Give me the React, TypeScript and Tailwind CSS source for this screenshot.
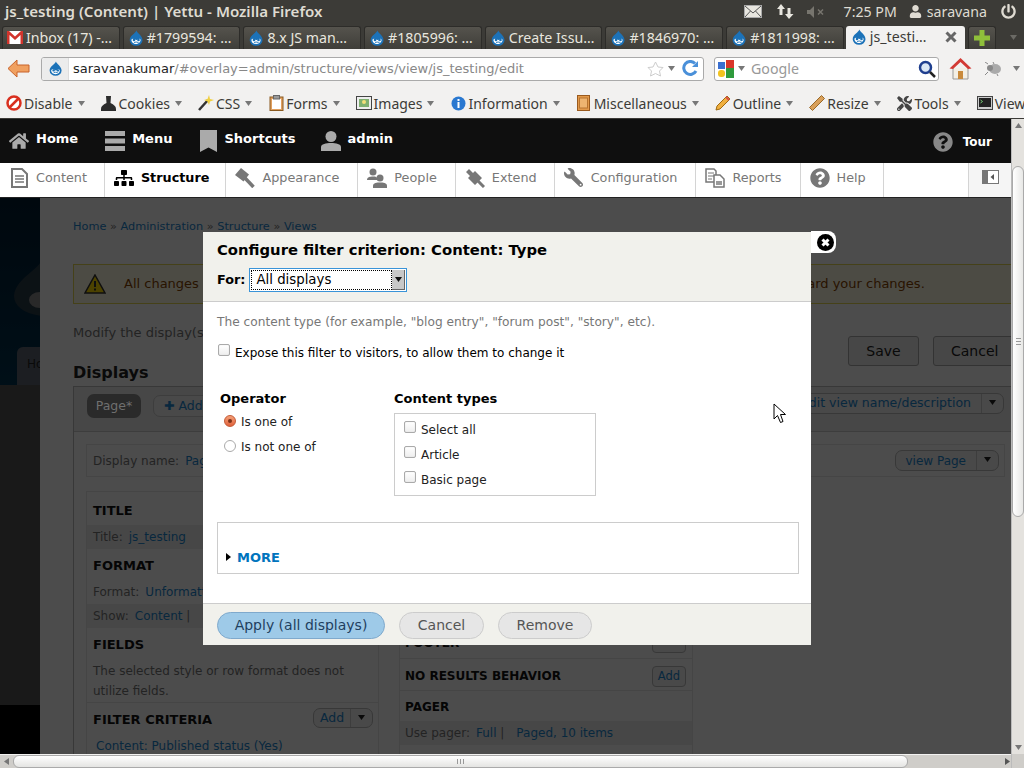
import React from "react";
import { FaHome, FaUser, FaQuestionCircle, FaSitemap, FaWrench, FaTools, FaPowerOff } from "react-icons/fa";

const Drop = ({ s = 16 }: { s?: number }) => (
  <svg width={s} height={s} viewBox="0 0 16 16" className="shrink-0">
    <path d="M8.5 0.5C9 3 14.5 5.5 14.5 10.2A6.4 5.6 0 0 1 1.7 10.2C1.7 5.5 7.5 3.5 8.5 0.5Z" fill="#1c72b8" />
    <path d="M3.5 9.5C5 7.5 7 10 8.5 10S11 7.5 12.5 9.5C13 11.5 11 14 8 14S3 11.5 3.5 9.5Z" fill="#fff" />
    <circle cx="6" cy="10" r="1.3" fill="#1c72b8" />
    <circle cx="10.5" cy="10" r="1.3" fill="#1c72b8" />
    <path d="M6 12.5Q8 11.5 10.5 12.5" stroke="#1c72b8" strokeWidth="0.9" fill="none" />
  </svg>
);

const Gmail = () => (
  <svg width="16" height="13" viewBox="0 0 16 13" className="shrink-0">
    <rect width="16" height="13" fill="#fff" />
    <path d="M0 0H2L8 5.5 14 0H16V13H13.5V4L8 9 2.5 4V13H0Z" fill="#d2342c" />
  </svg>
);

const Caret = ({ c = "#777" }: { c?: string }) => (
  <svg width="7" height="5" viewBox="0 0 7 5" className="shrink-0"><path d="M0 0H7L3.5 5Z" fill={c} /></svg>
);

const Tab = ({ label, gmail }: { label: string; gmail?: boolean }) => (
  <div className="w-[117.7px] h-[23px] mr-[3px] shrink-0 flex items-center gap-[3px] pl-[4px] pb-[1px] rounded-t-[3px] border border-b-0 border-[#2d2c29] bg-gradient-to-b from-[#55534d] to-[#3f3e39] text-[#e8e6df] text-[14.2px] whitespace-nowrap overflow-hidden">
    {gmail ? <Gmail /> : <Drop />}
    <span>{label}</span>
  </div>
);

const BM: React.FC<{ icon: React.ReactNode; label: string; last?: boolean }> = ({ icon, label, last }) => (
  <div className="flex items-center shrink-0 mr-[16px]">
    <span className="w-[16px] h-[16px] flex items-center justify-center mr-[2px]">{icon}</span>
    <span className="text-[14px] text-[#3c3b37]">{label}</span>
    {!last && <span className="ml-[5px]"><Caret /></span>}
  </div>
);

const tray = [
  { label: "Content", pr: "pr-[17px]", icon: <svg width="17" height="20" viewBox="0 0 17 20"><path d="M1 1H11L16 6V19H1Z" fill="#fff" stroke="#777" strokeWidth="2" /><path d="M4 8H13M4 11H13M4 14H13" stroke="#777" strokeWidth="1.5" /></svg> },
  { label: "Structure", pr: "pr-[16px]", active: true, icon: <FaSitemap size={20} color="#000" /> },
  { label: "Appearance", pr: "pr-[18px]", icon: <svg width="20" height="20" viewBox="0 0 20 20"><path d="M6 0L14 6.5 8.5 13.5 0 7Z" fill="#777" /><path d="M10 10L18.5 19" stroke="#777" strokeWidth="3.5" /></svg> },
  { label: "People", pr: "pr-[18px]", icon: <svg width="20" height="20" viewBox="0 0 20 20"><circle cx="6" cy="4" r="3.5" fill="#777" /><path d="M0 12C0 9 3 8.5 6 8.5S10 9 10 10.5V12Z" fill="#777" /><circle cx="13" cy="10" r="3.5" fill="#777" /><path d="M6 20V17.5C6 15 10 14.5 13 14.5S20 15 20 17.5V20Z" fill="#777" /></svg> },
  { label: "Extend", pr: "pr-[17px]", icon: <svg width="20" height="20" viewBox="0 0 20 20"><path d="M1 4L4 1 8 5 10 3 17 10 10 17 3 10 5 8Z" fill="#777" /><path d="M13 13L19 19" stroke="#777" strokeWidth="3" /></svg> },
  { label: "Configuration", pr: "pr-[18px]", icon: <FaWrench size={19} color="#777" className="-scale-x-100" /> },
  { label: "Reports", pr: "pr-[18px]", icon: <svg width="20" height="20" viewBox="0 0 20 20"><path d="M1 1H9L11 3V14H1Z" fill="#fff" stroke="#777" strokeWidth="1.5" /><path d="M3 5H9M3 8H9M3 11H7" stroke="#777" /><path d="M9 7H15L19 11V19H9Z" fill="#fff" stroke="#777" strokeWidth="1.5" /><rect x="11" y="13" width="6" height="4" fill="#999" /></svg> },
  { label: "Help", pr: "pr-[17px]", icon: <FaQuestionCircle size={20} color="#777" /> },
];

const Heading = ({ children }: { children: React.ReactNode }) => (
  <div className="text-[13px] font-bold text-[#111] leading-[16px]">{children}</div>
);
const Link = ({ children }: { children: React.ReactNode }) => <span className="text-[#1c86d0]">{children}</span>;

const Check = () => <span className="block w-[12px] h-[12px] shrink-0 rounded-[2px] border border-[#aaa] bg-gradient-to-b from-white to-[#eee] shadow-[inset_0_0_1px_#ccc]" />;

const Btn = ({ children, cls }: { children: React.ReactNode; cls: string }) => (
  <div className={`h-[27px] rounded-[14px] border flex items-center justify-center text-[14px] ${cls}`}>{children}</div>
);

const DropBtn = ({ children, cls, center }: { children: React.ReactNode; cls: string; center?: boolean }) => (
  <div className={`flex items-stretch rounded-[7px] border border-[#bbb] bg-[#f3f3f3] text-[#1c86d0] ${cls}`}>
    <span className={`flex-1 flex items-center whitespace-nowrap overflow-hidden ${center ? "justify-center" : "justify-end pr-[10px]"}`}>{children}</span>
    <span className="w-[22px] border-l border-[#ccc] flex items-start justify-center pt-[6px]"><Caret c="#222" /></span>
  </div>
);

export default function App() {
  return (
    <div className="w-[1024px] h-[768px] overflow-hidden flex flex-col bg-[#f2f1f0] font-['DejaVu_Sans',sans-serif]">
      {/* desktop panel */}
      <div className="h-[24px] shrink-0 flex items-center bg-[#3c3b37] text-[#dfdbd2] font-['Noto_Sans',sans-serif]">
        <span className="ml-[5px] mb-[1px] text-[15.1px] font-semibold">js_testing (Content) | Yettu - Mozilla Firefox</span>
        <div className="ml-auto flex items-center">
          <svg width="18" height="13" viewBox="0 0 18 13" className="mr-[15px]"><rect x="0.5" y="0.5" width="17" height="12" fill="#e8e6df" stroke="#aaa" /><path d="M1 1L9 8 17 1M1 12L6.5 6M17 12L11.5 6" stroke="#555" fill="none" /></svg>
          <svg width="17" height="17" viewBox="0 0 17 17" className="mr-[13px]"><path d="M4 1L8 6H5.5V12H2.5V6H0Z M12 16L8 11H10.5V5H13.5V11H16.5Z" fill="#e8e6df" /></svg>
          <svg width="19" height="12" viewBox="0 0 19 12" className="mr-[18px]"><path d="M0 4H3L7 0V12L3 8H0Z" fill="#77756e" /><path d="M11 3.5L16 8.5M16 3.5L11 8.5" stroke="#77756e" strokeWidth="1.5" /></svg>
          <span className="text-[14.2px] mr-[12px]">7:25 PM</span>
          <FaUser size={13} color="#dfdbd2" className="mr-[5px]" />
          <span className="text-[14.2px] mr-[14px]">saravana</span>
          <FaPowerOff size={15} color="#dfdbd2" className="mr-[8px]" />
        </div>
      </div>

      {/* tab strip */}
      <div className="h-[25px] shrink-0 flex items-end bg-[#3c3b37] pl-[2px] font-['Noto_Sans',sans-serif] relative">
        <Tab gmail label="Inbox (17) -…" />
        <Tab label="#1799594: …" />
        <Tab label="8.x JS man…" />
        <Tab label="#1805996: …" />
        <Tab label="Create Issu…" />
        <Tab label="#1846970: …" />
        <Tab label="#1811998: …" />
        <div className="w-[119px] h-[23px] -ml-[1px] shrink-0 flex items-center gap-[3px] pl-[5px] pb-[1px] rounded-t-[3px] bg-[#f2f1f0] text-[#3c3b37] text-[14.2px]">
          <Drop /><span>js_testi…</span>
          <svg width="12" height="12" viewBox="0 0 12 12" className="ml-auto mr-[8px]"><path d="M1.5 1.5L10.5 10.5M10.5 1.5L1.5 10.5" stroke="#666" strokeWidth="3" /></svg>
        </div>
        <div className="w-[28px] h-[23px] ml-[3px] shrink-0 flex items-center justify-center rounded-t-[3px] border border-b-0 border-[#2d2c29] bg-gradient-to-b from-[#55534d] to-[#3f3e39]">
          <svg width="16" height="16" viewBox="0 0 16 16"><path d="M5.5 0H10.5V5.5H16V10.5H10.5V16H5.5V10.5H0V5.5H5.5Z" fill="#8fc03a" /></svg>
        </div>
        <span className="ml-[14px] mb-[9px]"><Caret c="#6b6a65" /></span>
      </div>

      {/* navigation bar */}
      <div className="h-[39px] shrink-0 flex items-center bg-[#f2f1f0] font-['Noto_Sans',sans-serif]">
        <svg width="23" height="19" viewBox="0 0 23 19" className="ml-[7px]"><path d="M10 1L1 9.5 10 18V13H22V6H10Z" fill="#f0a060" stroke="#c8632a" /></svg>
        <div className="ml-[11px] w-[663px] h-[24px] flex items-center rounded-[3px] border border-[#aaa] bg-white overflow-hidden">
          <div className="w-[27px] h-full flex items-center justify-center bg-[#ececec] border-r border-[#ddd]"><Drop s={15} /></div>
          <span className="ml-[4px] whitespace-nowrap font-['DejaVu_Sans',sans-serif] text-[13px]"><span className="text-[#222]">saravanakumar</span><span className="text-[#888]">/#overlay=admin/structure/views/view/js_testing/edit</span></span>
          <svg width="17" height="16" viewBox="0 0 17 16" className="ml-auto"><path d="M8.5 1L11 6 16 6.5 12.5 10 13.5 15 8.5 12.5 3.5 15 4.5 10 1 6.5 6 6Z" fill="none" stroke="#ccc" /></svg>
          <span className="ml-[4px]"><Caret /></span>
          <svg width="17" height="17" viewBox="0 0 17 17" className="ml-[7px] mr-[4px]"><path d="M14 11A6.5 6.5 0 1 1 13 3.5" stroke="#4a90d9" strokeWidth="3" fill="none" /><path d="M16 1V7H10Z" fill="#4a90d9" /></svg>
        </div>
        <div className="ml-[10px] w-[225px] h-[24px] flex items-center rounded-[3px] border border-[#aaa] bg-white">
          <svg width="16" height="18" viewBox="0 0 16 18" className="ml-[3px]"><rect x="8" width="8" height="8" fill="#d9362a" /><rect y="2" width="7" height="7" fill="#3a6fd0" /><rect x="8" y="8" width="8" height="10" fill="#2f9a3c" /><rect y="10" width="7" height="7" rx="3" fill="#f3c320" /></svg>
          <span className="ml-[4px]"><Caret /></span>
          <span className="ml-[6px] text-[14.2px] text-[#999]">Google</span>
          <svg width="18" height="18" viewBox="0 0 18 18" className="ml-auto mr-[2px]"><circle cx="7.5" cy="7.5" r="5.5" fill="#dbe7f5" stroke="#1f3f8f" strokeWidth="2.5" /><path d="M12 12L17 17" stroke="#222" strokeWidth="2.5" /></svg>
        </div>
        <svg width="23" height="23" viewBox="0 0 23 23" className="ml-[10px]"><path d="M4 11V22H19V11" fill="#f3efe5" stroke="#999" /><path d="M0.5 11.5L11.5 1 22.5 11.5 19 12 11.5 5 4 12Z" fill="#d23a34" /><rect x="9" y="14" width="5" height="8" fill="#c98a3c" /></svg>
        <svg width="18" height="14" viewBox="0 0 18 14" className="ml-[13px]"><ellipse cx="10" cy="7" rx="6" ry="5" fill="#aaa" /><circle cx="5" cy="6" r="3" fill="#888" /><path d="M3 2L0 0M3 10L0 13M9 2L8 0M12 12L13 14" stroke="#888" /></svg>
        <span className="ml-[10px]"><Caret /></span>
      </div>

      {/* bookmarks */}
      <div className="h-[31px] shrink-0 flex items-center pl-[6px] overflow-hidden border-b border-[#3c3b37] bg-[#f2f1f0] font-['Noto_Sans',sans-serif]">
        <BM label="Disable" icon={<svg width="16" height="16" viewBox="0 0 16 16"><circle cx="8" cy="8" r="6.5" fill="#fff" stroke="#d9301f" strokeWidth="2.5" /><path d="M3.5 12.5L12.5 3.5" stroke="#d9301f" strokeWidth="2.5" /></svg>} />
        <BM label="Cookies" icon={<svg width="15" height="15" viewBox="0 0 15 15"><path d="M5 0H10L9.5 7C13 9 15 10 15 13V15H0V13C0 10 2 9 5.5 7Z" fill="#2c2c2c" /></svg>} />
        <BM label="CSS" icon={<svg width="16" height="16" viewBox="0 0 16 16"><path d="M1 15L10 5" stroke="#333" strokeWidth="2.5" /><path d="M11 0L12 4 16 5 12 6.5 11 10 9.5 6.5 6 5 9.5 4Z" fill="#f0d040" /></svg>} />
        <BM label="Forms" icon={<svg width="15" height="16" viewBox="0 0 15 16"><rect x="1" y="2" width="13" height="13.5" fill="#e0a060" stroke="#8a5a20" /><rect x="3" y="4" width="9" height="10" fill="#fff" /><rect x="4.5" y="0.5" width="6" height="3.5" fill="#999" stroke="#666" /></svg>} />
        <BM label="Images" icon={<svg width="16" height="14" viewBox="0 0 16 14"><rect x="0.5" y="0.5" width="15" height="13" fill="#eee" stroke="#444" /><rect x="3" y="3" width="10" height="8" fill="#7fb070" /><circle cx="8" cy="6" r="2" fill="#f3e07a" /></svg>} />
        <BM label="Information" icon={<svg width="15" height="15" viewBox="0 0 15 15"><circle cx="7.5" cy="7.5" r="7" fill="#2a78d0" /><rect x="6.5" y="6" width="2" height="6" fill="#fff" /><rect x="6.5" y="3" width="2" height="2" fill="#fff" /></svg>} />
        <BM label="Miscellaneous" icon={<svg width="13" height="16" viewBox="0 0 13 16"><rect x="0.5" y="0.5" width="12" height="15" fill="#e2994a" stroke="#9a5a1e" /><rect x="2.5" y="3" width="8" height="10" fill="#eeb470" stroke="#b87430" /></svg>} />
        <BM label="Outline" icon={<svg width="16" height="16" viewBox="0 0 16 16"><path d="M1 15L2 11 12 1 15 4 5 14Z" fill="#f0b040" stroke="#a06a10" /><path d="M11 2L14 5" stroke="#d9504a" strokeWidth="2" /></svg>} />
        <BM label="Resize" icon={<svg width="16" height="16" viewBox="0 0 16 16"><path d="M0.5 12.5L12.5 0.5 15.5 3.5 3.5 15.5Z" fill="#d9a05a" stroke="#9a6a2a" /></svg>} />
        <BM label="Tools" icon={<FaTools size={15} color="#444" />} />
        <BM last label="View" icon={<svg width="16" height="14" viewBox="0 0 16 14"><rect x="0.5" y="0.5" width="15" height="13" fill="#ccc" stroke="#444" /><rect x="2" y="2" width="12" height="9" fill="#222" /><path d="M3.5 4L5.5 5.5 3.5 7" stroke="#7c7" fill="none" /></svg>} />
      </div>

      <div className="flex-1 flex min-h-0">
        <div className="w-[1011px] flex flex-col min-w-0">
          {/* admin toolbar */}
          <div className="h-[44px] shrink-0 flex items-center bg-[#0f0f0f] text-white text-[13px] font-bold">
            <FaHome size={20} color="#aaa" className="ml-[9px]" />
            <span className="ml-[7px] mb-[4px]">Home</span>
            <svg width="20" height="20" viewBox="0 0 20 20" className="ml-[27px]"><path d="M0 0H20V5H0ZM0 7.5H20V12.5H0ZM0 15H20V20H0Z" fill="#aaa" /></svg>
            <span className="ml-[7px] mb-[4px]">Menu</span>
            <svg width="17" height="22" viewBox="0 0 17 22" className="ml-[28px]"><path d="M0 0H17V22L8.5 17.5 0 22Z" fill="#aaa" /></svg>
            <span className="ml-[7px] mb-[4px]">Shortcuts</span>
            <svg width="20" height="20" viewBox="0 0 20 20" className="ml-[25px]"><circle cx="10" cy="5.5" r="5.5" fill="#aaa" /><path d="M0 20V16C0 13 5 12 10 12S20 13 20 16V20Z" fill="#aaa" /></svg>
            <span className="ml-[7px] mb-[4px]">admin</span>
            <div className="ml-auto flex items-center mt-[2px] mr-[19px]">
              <FaQuestionCircle size={20} color="#888" />
              <span className="ml-[10px] text-[12px]">Tour</span>
            </div>
          </div>

          {/* admin tray */}
          <div className="h-[35px] shrink-0 flex bg-white border-b border-[#222] text-[12.8px]">
            {tray.map((t) => (
              <div key={t.label} className={`flex items-center gap-[7px] pl-[9px] pb-[5px] border-r border-[#d4d4d4] ${t.pr} ${t.active ? "text-black font-bold" : "text-[#777]"}`}>
                <span className="w-[20px] h-[20px] flex items-center justify-center">{t.icon}</span>
                <span>{t.label}</span>
              </div>
            ))}
            <div className="ml-auto w-[43px] border-l border-[#d4d4d4] bg-[#f5f5f5] flex items-start justify-center pt-[7px]">
              <svg width="17" height="14" viewBox="0 0 17 14"><rect width="17" height="14" fill="#777" /><rect x="6" y="1" width="10" height="12" fill="#fff" /><path d="M12 4V10L8.5 7Z" fill="#555" /></svg>
            </div>
          </div>

          {/* page under overlay */}
          <div className="relative h-[556px] shrink-0 overflow-hidden flex bg-white">
            <div className="w-[40px] shrink-0 flex flex-col">
              <div className="h-[187px] bg-gradient-to-b from-[#001c30] to-[#003350] relative overflow-hidden">
                <svg width="30" height="60" viewBox="0 0 30 60" className="absolute left-[12px] top-[60px]">
                  <path d="M30 2C24 14 4 20 2 38C2 48 12 56 30 58Z" fill="#2a3c48" />
                  <ellipse cx="28" cy="42" rx="11" ry="8" fill="#8a8a8a" />
                </svg>
                <div className="absolute left-[17px] top-[149px] w-[23px] h-[38px] rounded-tl-[6px] bg-[#5f6772] pl-[10px] pt-[8px] text-[12px] text-[#222] overflow-hidden">Ho</div>
              </div>
              <div className="h-[320px] bg-[#555]" />
              <div className="flex-1 bg-black" />
            </div>

            <div className="w-[978px] shrink-0 pl-[33px] pt-[22px] text-[12px] text-[#777]">
              <div className="text-[11.3px] leading-[14px]"><Link>Home</Link> » <Link>Administration</Link> » <Link>Structure</Link> » <Link>Views</Link></div>

              <div className="mt-[30px] h-[40px] w-[945px] border border-[#e6db55] bg-[#fffce5] flex items-center text-[13px] text-[#884400]">
                <svg width="22" height="20" viewBox="0 0 22 20" className="ml-[10px]"><path d="M11 1L21 19H1Z" fill="#fd0" stroke="#333" strokeWidth="1.5" /><rect x="10" y="7" width="2" height="6" fill="#333" /><rect x="10" y="14.5" width="2" height="2" fill="#333" /></svg>
                <span className="ml-[18px] whitespace-nowrap">All changes are stored temporarily. Click the Save to make your changes permanent. Click Cancel to discard your changes.</span>
              </div>

              <div className="mt-[22px] flex w-[945px] justify-between">
                <div>
                  <div className="text-[13px] text-[#777] leading-[14px]">Modify the display(s) of your view below or add new displays.</div>
                  <div className="mt-[24px] text-[16px] font-bold text-[#222] leading-[18px]">Displays</div>
                </div>
                <div className="flex gap-[14px] mt-[10px]">
                  <div className="w-[71px] h-[30px] rounded-[3px] border border-[#aaa] bg-[#eee] flex items-center justify-center text-[14px] text-[#222]">Save</div>
                  <div className="w-[85px] h-[30px] rounded-[3px] border border-[#aaa] bg-[#eee] flex items-center justify-start pl-[17px] text-[14px] text-[#222]">Cancel</div>
                </div>
              </div>

              <div className="mt-[4px] w-[945px] border border-[#bbb] h-[400px]">
                <div className="h-[45px] bg-[#ededed] border-b border-[#ccc] flex items-start pl-[13px] pr-[13px]">
                  <div className="relative z-10 mt-[7px] w-[54px] h-[24px] rounded-[7px] bg-[#2a2a2a] text-[#6f6f6f] flex items-center justify-center text-[12.5px]">Page*</div>
                  <div className="mt-[8px] ml-[12px] h-[22px] w-[120px] rounded-[7px] border border-[#ccc] bg-[#f3f3f3] pl-[10px] flex items-center text-[#1c86d0] text-[12.5px]">✚ Add</div>
                  <DropBtn cls="mt-[6px] ml-auto w-[240px] h-[21px] text-[12.5px]">edit view name/description</DropBtn>
                </div>
                <div className="px-[12px] pt-[12px]">
                  <div className="h-[33px] border border-[#e6e6e6] flex items-center pl-[6px] pr-[5px] text-[12px]">
                    <span>Display name:</span><span className="ml-[6px]"><Link>Page</Link></span>
                    <DropBtn cls="ml-auto w-[104px] h-[21px] text-[12px]">view Page</DropBtn>
                  </div>
                  <div className="flex mt-[14px] gap-[20px]">
                    <div className="w-[293px] border-x border-t border-[#e6e6e6] pt-[11px]">
                      <div className="px-[6px]"><Heading>TITLE</Heading></div>
                      <div className="mt-[6px] h-[24px] bg-[#eee] px-[6px] flex items-center">Title:<span className="ml-[6px]"><Link>js_testing</Link></span></div>
                      <div className="mt-[9px] px-[6px]"><Heading>FORMAT</Heading></div>
                      <div className="mt-[6px] h-[24px] px-[6px] flex items-center">Format:<span className="ml-[6px]"><Link>Unformatted list</Link></span></div>
                      <div className="h-[24px] bg-[#eee] px-[6px] flex items-center">Show:<span className="ml-[6px]"><Link>Content</Link> |</span><span className="ml-[12px]"><Link>Settings</Link></span></div>
                      <div className="mt-[9px] px-[6px]"><Heading>FIELDS</Heading></div>
                      <div className="mt-[8px] px-[6px] leading-[20px] border-b border-[#e6e6e6] pb-[1px]">The selected style or row format does not utilize fields.</div>
                      <div className="mt-[5px] px-[6px] flex items-start h-[24px]">
                        <div className="mt-[4px]"><Heading>FILTER CRITERIA</Heading></div>
                        <DropBtn center cls="ml-auto mr-[-1px] w-[60px] h-[20px] text-[12.5px]">Add</DropBtn>
                      </div>
                      <div className="mt-[5px] pl-[9px]"><Link>Content: Published status (Yes)</Link></div>
                    </div>
                    <div className="w-[294px] border-x border-[#e6e6e6] pt-[140px] text-[12px]">
                      <div className="h-[28px] border-b border-[#e6e6e6] pl-[5px] flex items-start justify-between">
                        <div className="mt-[4px] text-[12px] font-bold text-[#111] leading-[16px]">FOOTER</div>
                        <div className="mt-[2px] mr-[6px] w-[34px] h-[20px] rounded-[4px] border border-[#bbb] bg-[#f3f3f3]" />
                      </div>
                      <div className="h-[32px] border-b border-[#e6e6e6] pl-[5px] flex items-start justify-between">
                        <div className="mt-[9px] text-[12px] font-bold text-[#111] leading-[16px]">NO RESULTS BEHAVIOR</div>
                        <div className="mt-[7px] mr-[6px] w-[34px] h-[21px] rounded-[4px] border border-[#bbb] bg-[#f3f3f3] flex items-center justify-center text-[#1c86d0] text-[11.5px]">Add</div>
                      </div>
                      <div className="mt-[8px] px-[5px] text-[12px] font-bold text-[#111] leading-[16px]">PAGER</div>
                      <div className="mt-[6px] h-[24px] bg-[#eee] px-[5px] flex items-center">Use pager:<span className="ml-[6px]"><Link>Full</Link> |</span><span className="ml-[12px]"><Link>Paged, 10 items</Link></span></div>
                      <div className="mt-[6px] px-[5px]">More link: <Link>No</Link></div>
                    </div>
                  </div>
                </div>
              </div>
            </div>

            {/* dim */}
            <div className="absolute inset-0 bg-black/70" />

            {/* dialog */}
            <div className="absolute z-20 left-[203px] top-[34px] w-[608px] h-[413px] flex flex-col bg-white">
              <div className="h-[70px] shrink-0 bg-[#f1f1ec] border-b border-[#ccc] px-[14px] pt-[8px]">
                <div className="text-[14.8px] font-bold text-black leading-[20px]">Configure filter criterion: Content: Type</div>
                <div className="mt-[8px] flex items-center">
                  <span className="text-[12.8px] font-bold text-black">For:</span>
                  <div className="ml-[4px] w-[158px] h-[24px] border border-[#3a94d8] bg-white p-[1px] flex">
                    <div className="flex-1 border border-dotted border-black pl-[4px] text-[13.3px] text-black flex items-center">All displays</div>
                    <div className="w-[13px] bg-[#c8c8c8] border-r border-b border-[#666] flex items-center justify-center"><Caret c="#111" /></div>
                  </div>
                </div>
              </div>
              <div className="flex-1 pl-[14px] pr-[12px] pt-[13px] min-h-0">
                <div className="text-[12.2px] text-[#777] leading-[14px]">The content type (for example, "blog entry", "forum post", "story", etc).</div>
                <div className="mt-[16px] flex items-start ml-[1px] h-[16px]">
                  <span className="-mt-[1px]"><Check /></span>
                  <span className="ml-[5px] text-[12px] text-black leading-[16px]">Expose this filter to visitors, to allow them to change it</span>
                </div>
                <div className="mt-[30px] flex">
                  <div className="w-[177px] pl-[3px]">
                    <div className="text-[13px] font-bold text-black leading-[16px]">Operator</div>
                    <div className="mt-[7px] ml-[4px] flex items-center h-[16px]">
                      <span className="w-[12px] h-[12px] -translate-y-px rounded-full bg-gradient-to-b from-[#f4a078] to-[#e0603a] border border-[#c45a36] flex items-center justify-center"><span className="w-[4px] h-[4px] rounded-full bg-[#7b3218]" /></span>
                      <span className="ml-[5px] text-[12px] text-[#222]">Is one of</span>
                    </div>
                    <div className="mt-[9px] ml-[4px] flex items-center h-[16px]">
                      <span className="w-[12px] h-[12px] -translate-y-px rounded-full bg-white border border-[#aaa]" />
                      <span className="ml-[5px] text-[12px] text-[#222]">Is not one of</span>
                    </div>
                  </div>
                  <div>
                    <div className="text-[13px] font-bold text-black leading-[16px]">Content types</div>
                    <div className="mt-[6px] w-[202px] h-[83px] border border-[#ccc] pl-[9px] pt-[7px]">
                      {["Select all", "Article", "Basic page"].map((l) => (
                        <div key={l} className="h-[25px] flex items-start">
                          <Check />
                          <span className="ml-[5px] text-[12px] text-[#222] leading-[16px] mt-[1px]">{l}</span>
                        </div>
                      ))}
                    </div>
                  </div>
                </div>
                <div className="mt-[26px] h-[52px] border border-[#ccc] flex items-end pb-[7px] pl-[8px]">
                  <svg width="5" height="8" viewBox="0 0 5 8" className="mb-[5px]"><path d="M0 0L5 4 0 8Z" fill="#000" /></svg>
                  <span className="ml-[6px] text-[13px] font-bold text-[#0074bd] leading-[16px]">MORE</span>
                </div>
              </div>
              <div className="h-[42px] shrink-0 bg-[#f1f1ec] border-t border-[#ccc] flex items-start pl-[14px] pt-[8px] gap-[14px]">
                <Btn cls="w-[168px] bg-[#9ecae8] border-[#7fa9cc] text-[#1f3f5f]">Apply (all displays)</Btn>
                <Btn cls="w-[85px] bg-[#e6e6e6] border-[#ccc] text-[#555]">Cancel</Btn>
                <Btn cls="w-[94px] bg-[#e6e6e6] border-[#ccc] text-[#555]">Remove</Btn>
              </div>
              {/* close tab */}
              <div className="absolute left-[608px] top-[-1px] w-[25px] h-[22px] bg-white rounded-r-[8px] flex items-center justify-start pl-[6px]">
                <svg width="17" height="17" viewBox="0 0 17 17"><circle cx="8.5" cy="8.5" r="8.5" fill="#000" /><path d="M5.5 5.5L11.5 11.5M11.5 5.5L5.5 11.5" stroke="#fff" strokeWidth="3" /></svg>
              </div>
              {/* pointer */}
              <svg width="14" height="21" viewBox="0 0 14 21" className="absolute left-[570px] top-[171px]"><path d="M1 1V16L4.5 12.5 7.5 19.5 10 18.5 7.5 11.5H12.5Z" fill="#fff" stroke="#000" /></svg>
            </div>
          </div>

          {/* horizontal scrollbar */}
          <div className="h-[13px] mt-[1px] shrink-0 flex items-center bg-[#cfcdc9] relative">
            <div className="w-[13px] flex justify-center"><svg width="5" height="7" viewBox="0 0 5 7"><path d="M5 0L0 3.5 5 7Z" fill="#777" /></svg></div>
            <div className="w-[895px] h-[13px] rounded-[6px] border border-[#aaa] bg-gradient-to-b from-white to-[#e4e4e2] flex items-center justify-center">
              <svg width="7" height="5" viewBox="0 0 7 5"><path d="M0.5 0V5M3.5 0V5M6.5 0V5" stroke="#999" /></svg>
            </div>
            <div className="ml-auto w-[8px] flex justify-center"><svg width="5" height="7" viewBox="0 0 5 7"><path d="M0 0L5 3.5 0 7Z" fill="#555" /></svg></div>
          </div>
        </div>

        {/* vertical scrollbar */}
        <div className="w-[13px] shrink-0 flex flex-col bg-[#e4e2de] border-l border-[#bbb]">
          <div className="h-[13px] flex items-center justify-center"><svg width="7" height="5" viewBox="0 0 7 5"><path d="M0 5L3.5 0 7 5Z" fill="#777" /></svg></div>
          <div className="h-[34px]" />
          <div className="h-[351px] rounded-[6px] border border-[#aaa] bg-gradient-to-r from-white to-[#e8e8e6] flex items-center justify-center">
            <svg width="5" height="7" viewBox="0 0 5 7"><path d="M0 0.5H5M0 3.5H5M0 6.5H5" stroke="#999" /></svg>
          </div>
          <div className="flex-1" />
          <div className="h-[13px] flex items-center justify-center"><svg width="7" height="5" viewBox="0 0 7 5"><path d="M0 0L3.5 5 7 0Z" fill="#777" /></svg></div>
          <div className="h-[14px] bg-[#cfcdc9]" />
        </div>
      </div>
    </div>
  );
}
